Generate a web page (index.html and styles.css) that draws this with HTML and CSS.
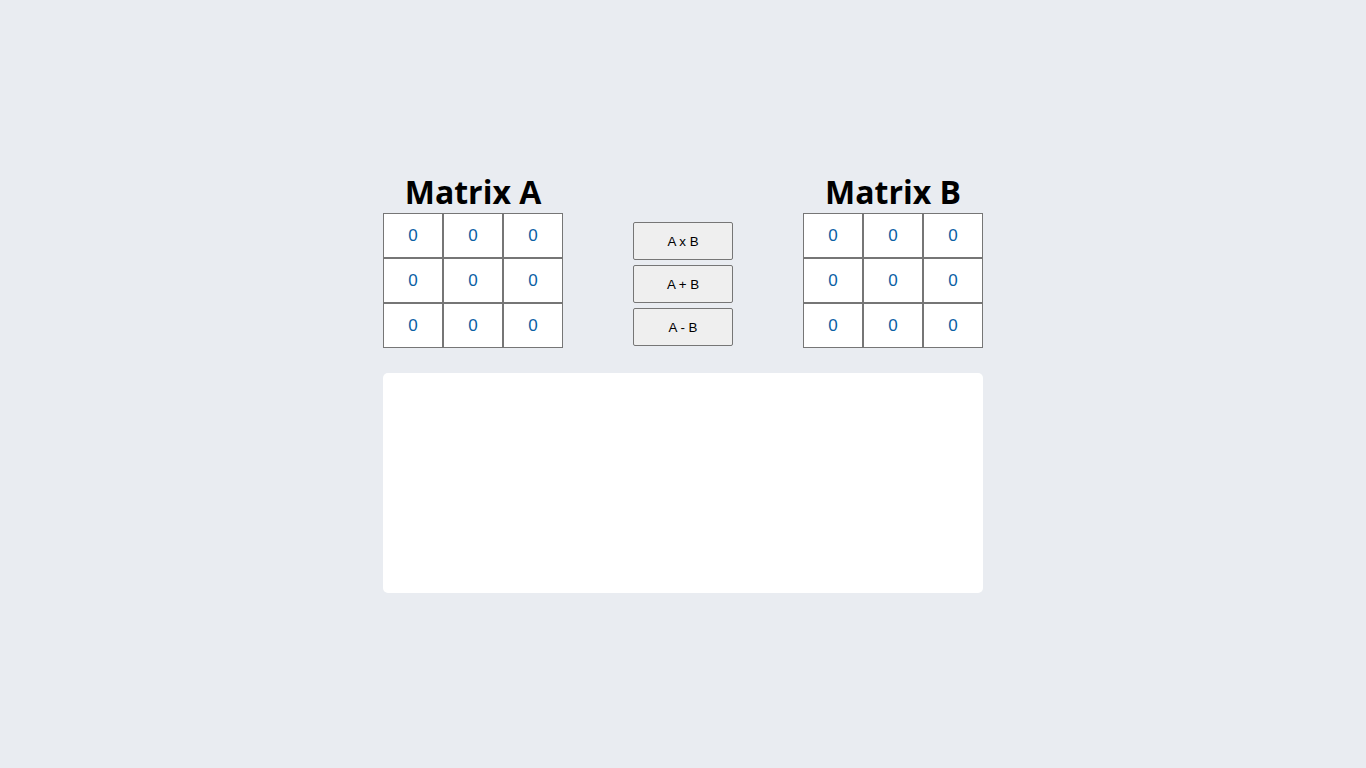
FILE: index.html
```html
<!DOCTYPE html>
<html>
<head>
<meta charset="utf-8">
<link rel="stylesheet" href="styles.css">
</head>
<body>
<main class="app">
  <div class="row">
    <section class="matrix">
      <h2 class="title">Matrix A</h2>
      <div class="grid">
        <input class="cell" value="0"><input class="cell" value="0"><input class="cell" value="0">
        <input class="cell" value="0"><input class="cell" value="0"><input class="cell" value="0">
        <input class="cell" value="0"><input class="cell" value="0"><input class="cell" value="0">
      </div>
    </section>
    <div class="ops">
      <button class="op">A x B</button>
      <button class="op">A + B</button>
      <button class="op">A - B</button>
    </div>
    <section class="matrix">
      <h2 class="title">Matrix B</h2>
      <div class="grid">
        <input class="cell" value="0"><input class="cell" value="0"><input class="cell" value="0">
        <input class="cell" value="0"><input class="cell" value="0"><input class="cell" value="0">
        <input class="cell" value="0"><input class="cell" value="0"><input class="cell" value="0">
      </div>
    </section>
  </div>
  <div class="result"></div>
</main>
</body>
</html>
```
FILE: styles.css
```css
html, body {
  margin: 0;
  padding: 0;
}
body {
  background: #e9ecf1;
  font-family: "Open Sans", "Noto Sans", sans-serif;
  height: 100vh;
  display: flex;
  align-items: center;
  justify-content: center;
}
.app {
  width: 600px;
  display: flex;
  flex-direction: column;
  gap: 25px;
}
.row {
  display: flex;
  justify-content: space-between;
  align-items: flex-start;
}
.matrix {
  width: 180px;
  display: flex;
  flex-direction: column;
}
.title {
  margin: 0;
  height: 38px;
  line-height: 34px;
  font-size: 32px;
  font-weight: 700;
  text-align: center;
  color: #000;
}
.grid {
  display: grid;
  grid-template-columns: repeat(3, 60px);
  grid-auto-rows: 45px;
}
.cell {
  box-sizing: border-box;
  width: 60px;
  height: 45px;
  margin: 0;
  padding: 0;
  border: 1px solid #767676;
  background: #fff;
  text-align: center;
  font-family: "Liberation Sans", Arial, sans-serif;
  font-size: 17px;
  color: #0b5fa5;
  outline: none;
}
.ops {
  display: flex;
  flex-direction: column;
  gap: 5px;
  padding-top: 47px;
}
.op {
  box-sizing: border-box;
  width: 100px;
  height: 38px;
  margin: 0;
  padding: 0;
  border: 1px solid #767676;
  border-radius: 2px;
  background: #efefef;
  color: #000;
  font-family: "Liberation Sans", Arial, sans-serif;
  font-size: 13.333px;
}
.result {
  height: 220px;
  background: #fff;
  border-radius: 5px;
}
```
